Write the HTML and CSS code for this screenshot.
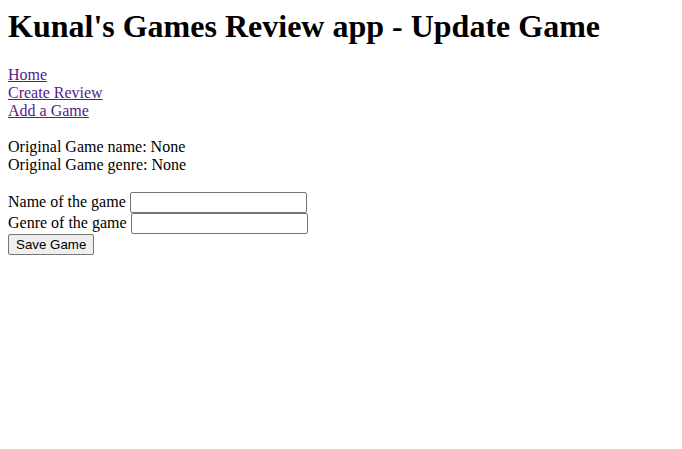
FILE: index.html
```html
<!DOCTYPE html>
<html>
<head>
<meta charset="utf-8">
<title>Update Game</title>
<link rel="stylesheet" href="styles.css">
</head>
<body class="page">
<h1 class="title">Kunal's Games Review app - Update Game</h1>
<nav class="nav">
<a class="link" href="#">Home</a><br>
<a class="link" href="#">Create Review</a><br>
<a class="link" href="#">Add a Game</a>
</nav>
<p class="info">Original Game name: None<br>Original Game genre: None</p>
<form class="form">
<label class="row">Name of the game <input class="field" type="text"></label><br>
<label class="row">Genre of the game <input class="field" type="text"></label><br>
<button class="btn" type="button">Save Game</button>
</form>
</body>
</html>
```
FILE: styles.css
```css
html, body { background: #fff; }
.page {
  margin: 8px;
  font-family: "Liberation Serif", "Times New Roman", serif;
  font-size: 16px;
  color: #000;
}
.title {
  font-size: 32px;
  font-weight: bold;
  margin: 0 0 21px 0;
  line-height: 37px;
}
.nav { line-height: 18px; }
.link { color: #551a8b; text-decoration: underline; }
.info { margin: 18px 0 18px 0; line-height: 18px; }
.form { margin: 0; line-height: 18px; }
.row { display: inline-block; }
.field {
  width: 177px;
  height: 21px;
  box-sizing: border-box;
  border: 1px solid #767676;
  border-radius: 2px;
  padding: 1px 2px;
  margin: 0;
  font-family: "Liberation Sans", Arial, sans-serif;
  font-size: 13.33px;
  vertical-align: baseline;
  background: #fff;
}
.btn {
  font-family: "Liberation Sans", Arial, sans-serif;
  font-size: 13.33px;
  height: 21px;
  padding: 1px 7px;
  border: 1px solid #767676;
  border-radius: 2px;
  background: #efefef;
  color: #000;
  margin: 0;
}
```
